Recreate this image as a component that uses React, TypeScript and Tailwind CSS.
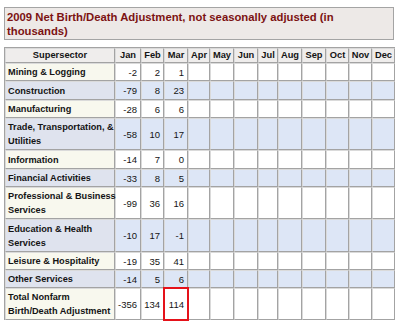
const months = ["Jan", "Feb", "Mar", "Apr", "May", "Jun", "Jul", "Aug", "Sep", "Oct", "Nov", "Dec"];
const colWidths = [26, 23, 24, 22, 24, 24, 20, 24, 24, 23, 23, 23];

type Row = { label: string[]; values: string[]; height: string };

const rows: Row[] = [
  { label: ["Mining & Logging"], values: ["-2", "2", "1"], height: "h-[18px]" },
  { label: ["Construction"], values: ["-79", "8", "23"], height: "h-[19px]" },
  { label: ["Manufacturing"], values: ["-28", "6", "6"], height: "h-[18px]" },
  { label: ["Trade, Transportation, &", "Utilities"], values: ["-58", "10", "17"], height: "h-[32px]" },
  { label: ["Information"], values: ["-14", "7", "0"], height: "h-[19px]" },
  { label: ["Financial Activities"], values: ["-33", "8", "5"], height: "h-[18px]" },
  { label: ["Professional & Business", "Services"], values: ["-99", "36", "16"], height: "h-[32px]" },
  { label: ["Education & Health", "Services"], values: ["-10", "17", "-1"], height: "h-[33px]" },
  { label: ["Leisure & Hospitality"], values: ["-19", "35", "41"], height: "h-[18px]" },
  { label: ["Other Services"], values: ["-14", "5", "6"], height: "h-[18px]" },
  { label: ["Total Nonfarm", "Birth/Death Adjustment"], values: ["-356", "134", "114"], height: "h-[32px]" },
];

const cell = "border-r border-b border-l border-t border-r-[#a3a3a3] border-b-[#a3a3a3] border-l-[#dadada] border-t-[#dadada] p-0";

export default function App() {
  return (
    <div className="w-[400px] h-[323px] bg-white pt-[7px] pl-1 font-['Liberation_Sans',Arial,sans-serif]">
      <div className="w-[390px] h-[33px] border border-[#a4a4a4] bg-[#ede9e7] pl-[2px] pt-[2px] text-[11.3px] leading-[14px] font-bold text-[#7c1212]">
        2009 Net Birth/Death Adjustment, not seasonally adjusted (in
        <br />
        thousands)
      </div>

      <table className="mt-[7px] w-[390px] table-fixed border-separate border-spacing-0 border-l border-t border-[#a3a3a3] text-[#141414]">
        <colgroup>
          <col className="w-[110px]" />
          {colWidths.map((w, i) => (
            <col key={i} style={{ width: w }} />
          ))}
        </colgroup>
        <thead>
          <tr className="h-[15px] bg-[#efedec]">
            <th className={`${cell} text-center text-[9.3px] leading-[11px] font-bold`}>Supersector</th>
            {months.map((m) => (
              <th key={m} className={`${cell} text-center text-[9.3px] leading-[11px] font-bold`}>
                {m}
              </th>
            ))}
          </tr>
        </thead>
        <tbody>
          {rows.map((r, ri) => {
            const alt = ri % 2 === 1;
            return (
              <tr key={ri} className={r.height}>
                <td
                  className={`${cell} pl-[2px] text-left align-middle text-[9.2px] leading-[14px] font-bold whitespace-nowrap ${
                    alt ? "bg-[#dfe3ee]" : "bg-[#f8f8ee]"
                  }`}
                >
                  {r.label.map((l, li) => (
                    <div key={li}>{l}</div>
                  ))}
                </td>
                {months.map((m, mi) => {
                  const isMarked = ri === rows.length - 1 && mi === 2;
                  return (
                    <td
                      key={m}
                      className={`${cell} pr-[3px] text-right align-middle text-[9.5px] leading-[11px] ${
                        alt ? "bg-[#dde6f6]" : "bg-white"
                      } ${isMarked ? "outline-2 outline-[#e5121a] -outline-offset-1" : ""}`}
                    >
                      {r.values[mi] ?? ""}
                    </td>
                  );
                })}
              </tr>
            );
          })}
        </tbody>
      </table>
    </div>
  );
}
